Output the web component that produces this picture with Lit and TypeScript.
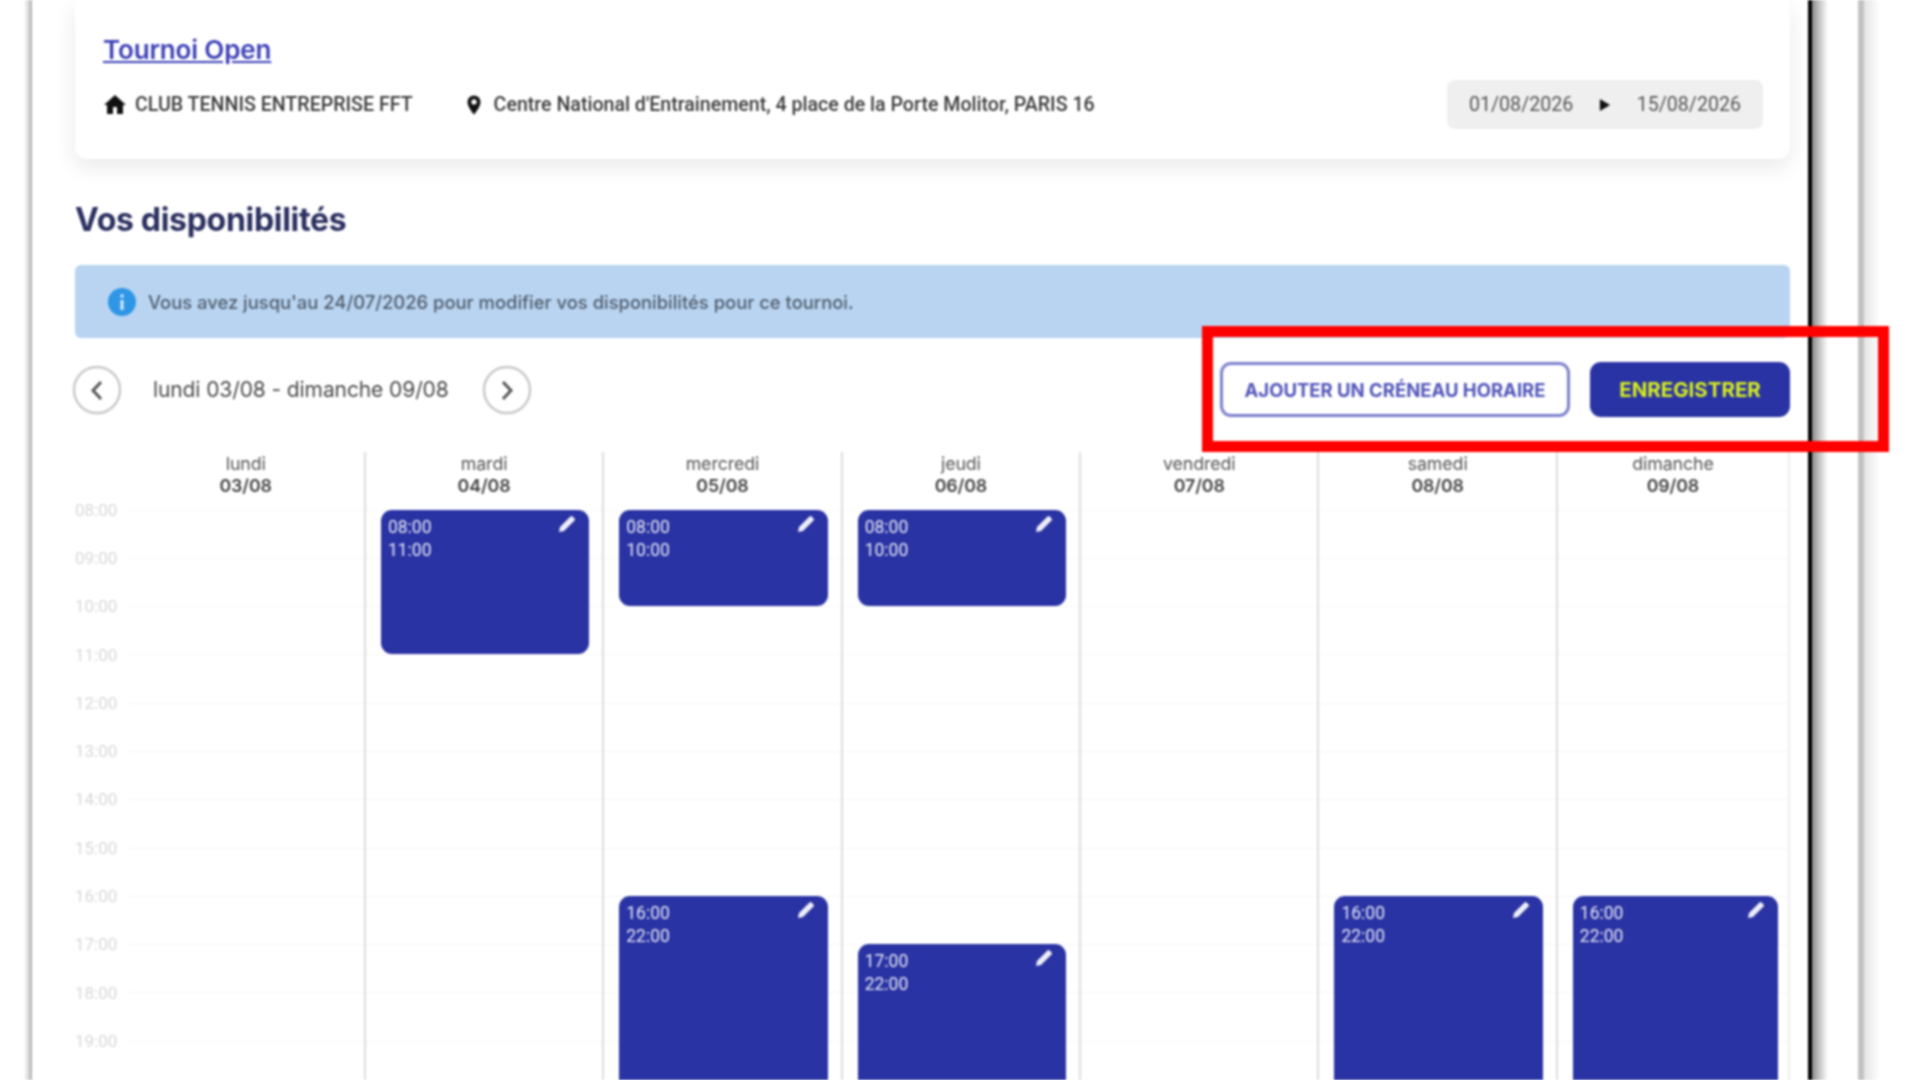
import { LitElement, html, css, svg } from "lit";
import { customElement } from "lit/decorators.js";

const START = 8;
const HOURS = Array.from({ length: 12 }, (_, i) => `${String(i + START).padStart(2, "0")}:00`);
const DAYS = [
  { name: "lundi", date: "03/08", slots: [] as [number, number][] },
  { name: "mardi", date: "04/08", slots: [[8, 11]] as [number, number][] },
  { name: "mercredi", date: "05/08", slots: [[8, 10], [16, 22]] as [number, number][] },
  { name: "jeudi", date: "06/08", slots: [[8, 10], [17, 22]] as [number, number][] },
  { name: "vendredi", date: "07/08", slots: [] as [number, number][] },
  { name: "samedi", date: "08/08", slots: [[16, 22]] as [number, number][] },
  { name: "dimanche", date: "09/08", slots: [[16, 22]] as [number, number][] },
];
const fmt = (h: number) => `${String(h).padStart(2, "0")}:00`;

const pencil = svg`<svg class="pencil" viewBox="0 0 20 20"><path d="M2 18l1-5L13.5 2.5a1.5 1.5 0 0 1 2.100 0l1.900 1.900a1.500 1.500 0 0 1 0 2.100L7 17z" fill="#eeeef8"/></svg>`;

@customElement("app-root")
export class AppRoot extends LitElement {
  static styles = css`
    :host { display: block; }
    * { box-sizing: border-box; }
    .stage {
      position: relative; display: flex; height: 1080px; width: 1920px; overflow: hidden;
      background: #fff; padding-left: 24px; filter: blur(0.9px);
      font-family: Inter, "Open Sans", sans-serif; color: #444;
    }
    .edge-left { width: 8px; flex: none; background: linear-gradient(90deg, #fff, #d8d8d8 55%, #aaa); }
    .page { width: 1776px; flex: none; padding: 0 18px 0 43px; background: #fff; }
    .edge-black { width: 4px; flex: none; background: #000; }
    .edge-shade { width: 16px; flex: none; background: linear-gradient(90deg, #8a8a8a, #c4c4c4 45%, #fff); }
    .edge-gap { width: 30px; flex: none; }
    .edge-gray { width: 6px; flex: none; background: #c2c2c2; }
    .edge-fade { width: 16px; flex: none; background: linear-gradient(90deg, #e4e4e4, #fff); }

    .card {
      height: 159px; padding: 32px 27px 30px 28px; background: #fff;
      border-radius: 0 0 12px 12px; box-shadow: 0 8px 22px rgba(0, 0, 0, 0.09);
    }
    .title {
      display: block; height: 36px; line-height: 36px; font-size: 26px; font-weight: 600;
      color: #3b3fb5; text-decoration: underline; margin-bottom: 12px; letter-spacing: -0.15px;
    }
    .meta { display: flex; align-items: center; height: 49px; font-family: Roboto, sans-serif; font-size: 19.600px; font-weight: 500; color: #3c3c3c; }
    .meta svg { flex: none; fill: #111; }
    .home { margin-right: -1px; }
    .club { margin-left: 9px; }
    .pin { margin-left: 54px; }
    .addr { margin-left: 13px; flex: 1; }
    .range {
      display: flex; align-items: center; width: 316px; height: 49px; padding: 0 22px;
      background: #efefef; border-radius: 8px; justify-content: space-between; color: #555; font-weight: 400;
    }
    h2 { margin: 41px 0 25px; height: 40px; line-height: 40px; font-size: 32px; font-weight: 700; color: #2c3060; letter-spacing: -0.3px; }
    .banner {
      display: flex; align-items: center; gap: 12px; height: 73px; padding-left: 33px;
      background: #b8d4f1; border-radius: 6px; font-size: 18.400px; font-weight: 500; color: #525d6c;
    }
    .toolbar { display: flex; align-items: center; height: 55px; margin: 24px 0 35px; }
    .nav { flex: none; width: 50px; height: 50px; margin-left: -3px; }
    .week { margin: 0 36px 0 31px; font-size: 21px; color: #4a4a4a; letter-spacing: -0.1px; }
    .actions { margin-left: auto; display: flex; gap: 20px; }
    button {
      height: 55px; border-radius: 11px; font-family: inherit; font-weight: 700; padding: 0;
    }
    .ghost { width: 350px; background: #fff; border: 3px solid #7b80cb; color: #5054b8; font-size: 18.500px; }
    .solid { width: 200px; background: #2a33a3; border: 0; color: #d8ee1f; font-size: 20.500px; }

    .calendar { display: flex; }
    .gutter { width: 52.500px; flex: none; padding-top: 33.500px; }
    .hour { height: 48.3px; display: flex; align-items: center; font-family: Roboto, sans-serif; font-size: 17px; color: #d8d8d8; }
    .days { flex: 1; display: grid; grid-template-columns: repeat(6, 238.400px) 1fr; }
    .day { border-right: 2px solid #dcdcdc; }
    .day:last-child { border-right-color: #eeeeee; }
    .head { height: 57.500px; padding-top: 1px; text-align: center; font-size: 17.800px; line-height: 22px; color: #555; letter-spacing: -0.1px; }
    .head b { display: block; font-weight: 600; color: #444; }
    .body { position: relative; display: grid; grid-template-rows: repeat(14, 48.3px); }
    .line { grid-column: 1; border-top: 1px solid #f7f7f7; }
    .slot {
      grid-column: 1; position: relative; z-index: 1; margin: 0 13px 0 15px; padding: 6px 7px;
      background: #2a33a3; border-radius: 11px; color: #e6e7f6; font-family: Roboto, sans-serif; font-size: 17.500px; line-height: 23px;
    }
    .day:last-child .slot { margin-right: 10px; }
    .slot div { height: 23px; }
    .pencil { position: absolute; top: 4px; right: 12px; width: 20px; height: 20px; }

    .mark { position: absolute; left: 1202px; top: 326px; width: 687px; height: 126px; border: 11px solid #ff0000; z-index: 2; }
  `;

  render() {
    return html`
      <div class="stage">
        <div class="edge-left"></div>
        <div class="page">
          <section class="card">
            <a class="title">Tournoi Open</a>
            <div class="meta">
              <svg class="home" width="24" height="24" viewBox="0 0 24 24"><path d="M10 21v-7h4v7h6v-9h3L12 2 1 12h3v9z"/></svg>
              <span class="club">CLUB TENNIS ENTREPRISE FFT</span>
              <svg class="pin" width="14" height="20" viewBox="0 0 16 22"><path fill-rule="evenodd" d="M8 0a7.5 7.5 0 0 0-7.5 7.5C.5 13 8 22 8 22s7.500-9 7.500-14.500A7.500 7.500 0 0 0 8 0zm0 10.500a3 3 0 1 1 0-6 3 3 0 0 1 0 6z"/></svg>
              <span class="addr">Centre National d'Entrainement, 4 place de la Porte Molitor, PARIS 16</span>
              <div class="range">
                <span>01/08/2026</span>
                <svg width="12" height="14" viewBox="0 0 14 16"><path d="M1 1l12 7-12 7z"/></svg>
                <span>15/08/2026</span>
              </div>
            </div>
          </section>
          <h2>Vos disponibilités</h2>
          <div class="banner">
            <svg width="28" height="28" viewBox="0 0 28 28"><circle cx="14" cy="14" r="14" fill="#2f96e6"/><rect x="12.500" y="12" width="3" height="10" fill="#dbeeff"/><rect x="12.500" y="6.500" width="3" height="3" fill="#dbeeff"/></svg>
            <span>Vous avez jusqu'au 24/07/2026 pour modifier vos disponibilités pour ce tournoi.</span>
          </div>
          <div class="toolbar">
            <svg class="nav" viewBox="0 0 50 50" fill="none"><circle cx="25" cy="25" r="23" stroke="#c9c9c9" stroke-width="2.500"/><path d="M29 17l-8 8.500 8 8.500" stroke="#555" stroke-width="3"/></svg>
            <span class="week">lundi 03/08 - dimanche 09/08</span>
            <svg class="nav" viewBox="0 0 50 50" fill="none"><circle cx="25" cy="25" r="23" stroke="#c9c9c9" stroke-width="2.500"/><path d="M21 17l8 8.500-8 8.500" stroke="#555" stroke-width="3"/></svg>
            <div class="actions">
              <button class="ghost">AJOUTER UN CRÉNEAU HORAIRE</button>
              <button class="solid">ENREGISTRER</button>
            </div>
          </div>
          <div class="calendar">
            <div class="gutter">${HOURS.map((h) => html`<div class="hour">${h}</div>`)}</div>
            <div class="days">
              ${DAYS.map(
                (d) => html`
                  <div class="day">
                    <div class="head">${d.name}<b>${d.date}</b></div>
                    <div class="body">
                      ${HOURS.map((_, i) => html`<div class="line" style="grid-row:${i + 1}"></div>`)}
                      ${d.slots.map(
                        ([a, b]) => html`
                          <div class="slot" style="grid-row:${a - START + 1} / ${b - START + 1}">
                            <div>${fmt(a)}</div>
                            <div>${fmt(b)}</div>
                            ${pencil}
                          </div>
                        `
                      )}
                    </div>
                  </div>
                `
              )}
            </div>
          </div>
        </div>
        <div class="edge-black"></div>
        <div class="edge-shade"></div>
        <div class="edge-gap"></div>
        <div class="edge-gray"></div>
        <div class="edge-fade"></div>
        <div class="mark"></div>
      </div>
    `;
  }
}
